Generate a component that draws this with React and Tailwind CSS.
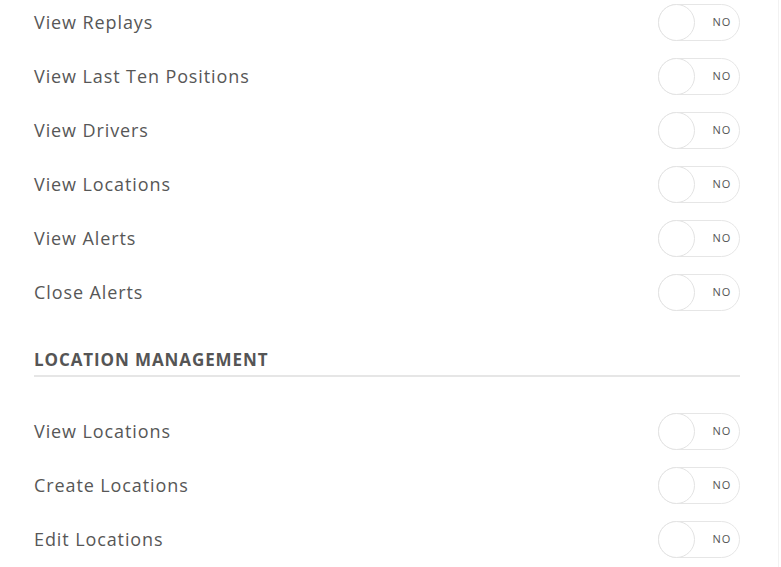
const general = [
  "View Replays",
  "View Last Ten Positions",
  "View Drivers",
  "View Locations",
  "View Alerts",
  "Close Alerts",
];

const locations = ["View Locations", "Create Locations", "Edit Locations"];

function Toggle() {
  return (
    <div className="relative flex h-[37px] w-[82px] items-center rounded-full border border-[#e6e6e6] bg-white">
      <div className="absolute -left-px -top-px h-[37px] w-[37px] rounded-full border border-[#e3e3e3] bg-white" />
      <span className="ml-auto mr-[8px] text-[11px] tracking-[0.8px] text-[#555]">NO</span>
    </div>
  );
}

function Row({ label }) {
  return (
    <div className="flex h-[54px] items-center justify-between">
      <span className="text-[18px] tracking-[0.9px] text-[#575757]">{label}</span>
      <Toggle />
    </div>
  );
}

export default function App() {
  return (
    <div
      className="h-[567px] w-[781px] overflow-hidden bg-white"
      style={{ fontFamily: '"Open Sans", "Liberation Sans", sans-serif' }}
    >
      <div className="-mt-[5px] w-[779px] border-r border-[#f2f2f2] pl-[34px] pr-[38px] pb-10">
        {general.map((g) => (
          <Row key={g} label={g} />
        ))}
        <div className="mt-[29px] border-b-2 border-[#e6e6e6] pb-[3px]">
          <h2 className="text-[17px] font-bold leading-6 tracking-[0.9px] text-[#555]">LOCATION MANAGEMENT</h2>
        </div>
        <div className="mt-[27px]">
          {locations.map((l) => (
            <Row key={l} label={l} />
          ))}
        </div>
      </div>
    </div>
  );
}
